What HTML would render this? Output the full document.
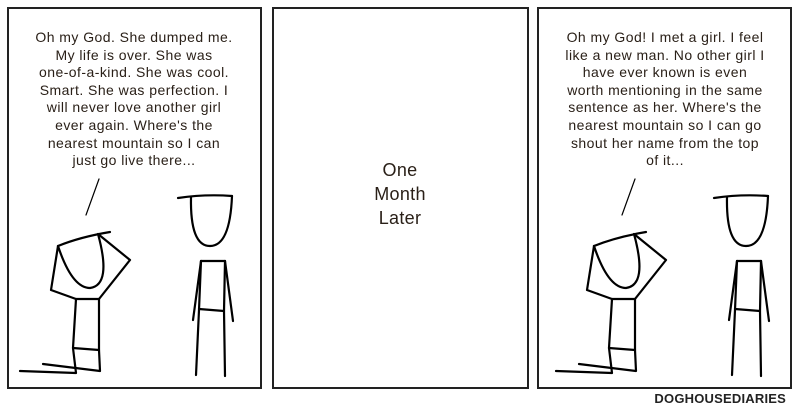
<!DOCTYPE html>
<html><head><meta charset="utf-8"><style>
body{margin:0;width:800px;height:413px;background:#fff;position:relative;overflow:hidden;font-family:"Liberation Sans",sans-serif;}
.p{position:absolute;top:7px;height:378px;border:2px solid #222;box-sizing:content-box;}
.t{position:absolute;text-align:center;color:#2a2018;font-size:14px;letter-spacing:0.45px;line-height:17.6px;white-space:nowrap;}
.brand{position:absolute;right:14px;top:391px;font-weight:bold;font-size:13px;color:#222;letter-spacing:0.2px;}
</style></head><body>
<div class="p" style="left:7px;width:251px"></div>
<div class="p" style="left:272px;width:253px"></div>
<div class="p" style="left:537px;width:251px"></div>
<div class="t" style="left:24px;width:220px;top:29px">Oh my God. She dumped me.<br>My life is over. She was<br>one-of-a-kind. She was cool.<br>Smart. She was perfection. I<br>will never love another girl<br>ever again. Where's the<br>nearest mountain so I can<br>just go live there...</div>
<div class="t" style="left:550px;width:230px;top:29px">Oh my God! I met a girl. I feel<br>like a new man. No other girl I<br>have ever known is even<br>worth mentioning in the same<br>sentence as her. Where's the<br>nearest mountain so I can go<br>shout her name from the top<br>of it...</div>
<div class="t" style="left:340px;width:120px;top:158px;font-size:18px;line-height:24px;letter-spacing:0.3px">One<br>Month<br>Later</div>
<svg width="800" height="413" style="position:absolute;left:0;top:0" fill="none" stroke="#000" stroke-width="2.2" stroke-linecap="round" stroke-linejoin="round">
<g id="f">
<path d="M99 179 L86 215" stroke-width="1.2"/>
<path d="M58 246 Q80 237 110 232"/>
<path d="M98 234 Q112 285 90 288 Q72 288 58 246"/>
<path d="M98 234 L130 260 L99 299"/>
<path d="M58 246 L51 290 L76 299 L99 299"/>
<path d="M76 299 L73 348 L76 373 L20 371"/>
<path d="M99 299 L99 350 L100 371 L43 364"/>
<path d="M73 348 L99 350"/>
<path d="M178 198 Q205 194 232 196"/>
<path d="M191 197 Q190 246 210 246 Q230 246 232 196"/>
<path d="M201 261 L225 261"/>
<path d="M201 261 L199 310 L196 375"/>
<path d="M225 261 L224 311 L225 376"/>
<path d="M201 261 L193 320"/>
<path d="M225 261 L233 321"/>
<path d="M199 309 L224 311"/>
</g>
<use href="#f" transform="translate(536,0)"/>
</svg>
<div class="brand">DOGHOUSEDIARIES</div>
</body></html>
